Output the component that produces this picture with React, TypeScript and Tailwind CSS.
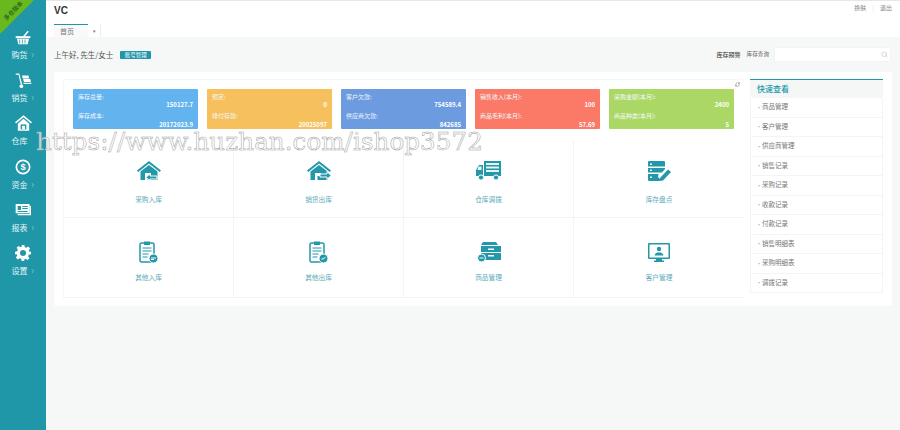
import React from "react";
import { ChevronRight, RefreshCw, Search } from "lucide-react";

const font = { fontFamily: '"Noto Sans CJK SC","Liberation Sans",sans-serif' };
const T = "#2298aa";

function Basket() {
  return (
    <svg width="16" height="15" viewBox="0 0 24 22" fill="#fff">
      <path d="M1 9h22v3H1z" />
      <path d="M3 13h18l-2 8H5z" />
      <path d="M12 9l7-8 1.600 1.200L15 9z" />
      <path d="M7 14v6M11 14v6M15 14v6" stroke={T} strokeWidth="1.200" />
    </svg>
  );
}
function Cart() {
  return (
    <svg width="17" height="17" viewBox="0 0 24 24" fill="#fff">
      <path d="M1 2h5l4 15h-2L5 4H1z" />
      <circle cx="9" cy="20" r="2.600" />
      <path d="M10 5h9l1 4h-9zM11.500 10h10l1 4h-10zM12 15h11v2H12z" />
    </svg>
  );
}
function Home() {
  return (
    <svg width="17" height="16" viewBox="0 0 24 22" fill="#fff">
      <path d="M12 0L0 10l1.500 1.800L12 3l10.500 8.800L24 10z" />
      <path d="M4 12l8-7 8 7v10H4z" />
      <path d="M8 13h8v7H8z" fill={T} />
      <path d="M10 15h4v5h-4z" />
    </svg>
  );
}
function Money() {
  return (
    <svg width="16" height="16" viewBox="0 0 24 24" fill="none">
      <circle cx="12" cy="12" r="10" stroke="#fff" strokeWidth="2.500" fill={T} />
      <text x="12" y="17" textAnchor="middle" fontSize="14" fontWeight="700" fill="#fff" fontFamily="Liberation Sans">$</text>
    </svg>
  );
}
function Report() {
  return (
    <svg width="16" height="14" viewBox="0 0 24 20" fill="#fff">
      <path d="M1 1h20a1 1 0 0 1 1 1v13H2a1 1 0 0 1-1-1z" />
      <path d="M22 4h2v14H4v-2h18z" />
      <path d="M4 4h5v6H4zM11 4h8v1.500h-8zM11 7h8v1.500h-8zM4 11.500h15V13H4z" fill={T} />
    </svg>
  );
}
function Gear() {
  return (
    <svg width="16" height="16" viewBox="0 0 24 24" fill="#fff" fillRule="evenodd">
      <path d="M10 0h4l.7 3.400 2.200.9 2.900-1.900 2.800 2.800-1.900 2.900.9 2.200L24 10v4l-3.400.7-.9 2.200 1.900 2.900-2.800 2.800-2.900-1.900-2.200.9L14 24h-4l-.7-3.400-2.200-.9-2.900 1.900-2.800-2.800 1.900-2.900-.9-2.200L0 14v-4l3.400-.7.9-2.200L2.400 4.200l2.800-2.800 2.900 1.900 2.200-.9zM12 7.500a4.500 4.500 0 1 0 0 9 4.500 4.500 0 0 0 0-9z" />
    </svg>
  );
}

function HouseIcon({ out }: { out?: boolean }) {
  return (
    <svg width="24" height="20" viewBox="0 0 24 20" fill={T}>
      <path d="M12 0L0 9.500l1.300 1.500L12 2.500 22.700 11 24 9.500z" />
      <path d="M3.500 10.500L12 4l8.500 6.500V19h-17z" />
      <path d="M8 19v-7h6v3H10.500v4z" fill="#fff" />
      {out ? <path d="M13 13h7v-2.500l4 4-4 4V16h-7z" fill={T} stroke="#fff" strokeWidth="1" /> : <path d="M20 15h-7v-2.500l-4 4 4 3V18h7z" fill={T} stroke="#fff" strokeWidth="1" />}
    </svg>
  );
}
function Truck() {
  return (
    <svg width="25" height="20" viewBox="0 0 25 20" fill={T}>
      <path d="M8 0h17v15H8z" />
      <path d="M10 2h13v2H10zM10 5.500h13v2H10zM10 9h13v2H10z" fill="#e6f4f6" />
      <path d="M7 4v11H0V9l3-5z" />
      <path d="M2.500 5.500h3v3.500H1.500z" fill="#fff" />
      <circle cx="5" cy="16.500" r="2.600" stroke="#fff" />
      <circle cx="20" cy="16.500" r="2.600" stroke="#fff" />
    </svg>
  );
}
function Stack() {
  return (
    <svg width="23" height="20" viewBox="0 0 23 20" fill={T}>
      <path d="M0 1a1 1 0 0 1 1-1h15a1 1 0 0 1 1 1v4.500H0zM0 7h17v1l-3 3.500H0zM0 13h10.500l-.5 3 2.500 2.500-1 1.500H1a1 1 0 0 1-1-1z" />
      <path d="M2 2.500h2v1.500H2zM2 8.500h2V10H2zM2 15.500h2V17H2z" fill="#fff" />
      <path d="M12 17l8-8.500 3 2.500-8 8.500-3.500.5z" />
    </svg>
  );
}
function Clip({ out }: { out?: boolean }) {
  return (
    <svg width="20" height="24" viewBox="0 0 20 24" fill="none">
      <rect x="1" y="3" width="14" height="19" rx="1.500" stroke={T} strokeWidth="1.500" />
      <path d="M5 1.500h6V5H5z" fill={T} />
      <path d="M3.500 8h9M3.500 11h9M3.500 14h6M3.500 17h5" stroke={T} strokeWidth="1.200" />
      <circle cx="14.500" cy="18.500" r="4.500" fill={T} stroke="#fff" />
      {out ? <path d="M12.500 19l2-.1 2-2" stroke="#fff" /> : <path d="M12 18h5M12 19.500h3" stroke="#fff" />}
    </svg>
  );
}
function Box() {
  return (
    <svg width="24" height="21" viewBox="0 0 24 21" fill={T}>
      <path d="M6 0h13l2 3H4z" />
      <path d="M4 4h20v14H4z" />
      <path d="M4 10.500h20" stroke="#fff" />
      <path d="M11 6.500h6v1.500h-6zM11 13h6v1.500h-6z" fill="#fff" />
      <circle cx="4.500" cy="16" r="4" stroke="#fff" />
      <path d="M2.500 15.500h4v1h-4z" fill="#fff" />
    </svg>
  );
}
function Monitor() {
  return (
    <svg width="22" height="19" viewBox="0 0 22 19" fill={T}>
      <path fillRule="evenodd" d="M0 1a1 1 0 0 1 1-1h20a1 1 0 0 1 1 1v14a1 1 0 0 1-1 1H1a1 1 0 0 1-1-1zM1.500 1.500v13h19v-13z" />
      <circle cx="11" cy="6" r="2.200" />
      <path d="M6.500 12.500c.5-2.500 2.500-3 4.500-3s4 .5 4.500 3z" />
      <path d="M8 16h6v1.500h2V19H6v-1.500h2z" />
    </svg>
  );
}

const nav = [
  { icon: <Basket />, label: "购货", arrow: true },
  { icon: <Cart />, label: "销货", arrow: true },
  { icon: <Home />, label: "仓库", arrow: false },
  { icon: <Money />, label: "资金", arrow: true },
  { icon: <Report />, label: "报表", arrow: true },
  { icon: <Gear />, label: "设置", arrow: true },
];

const cards = [
  { bg: "bg-[#63b3ee]", a: "库存总量:", av: "150127.7", b: "库存成本:", bv: "20172023.9" },
  { bg: "bg-[#f6c05c]", a: "预定:", av: "0", b: "排付存款:", bv: "20025097" },
  { bg: "bg-[#6c9be0]", a: "客户欠款:", av: "754589.4", b: "供应商欠款:", bv: "842685" },
  { bg: "bg-[#fa7967]", a: "销售收入(本月):", av: "100", b: "商品毛利(本月):", bv: "57.69" },
  { bg: "bg-[#abd865]", a: "采购金额(本月):", av: "2400", b: "商品种类(本月):", bv: "5" },
];

const tiles = [
  { icon: <HouseIcon />, label: "采购入库" },
  { icon: <HouseIcon out />, label: "销货出库" },
  { icon: <Truck />, label: "仓库调拨" },
  { icon: <Stack />, label: "库存盘点" },
  { icon: <Clip />, label: "其他入库" },
  { icon: <Clip out />, label: "其他出库" },
  { icon: <Box />, label: "商品管理" },
  { icon: <Monitor />, label: "客户管理" },
];

const quick = ["商品管理", "客户管理", "供应商管理", "销售记录", "采购记录", "收款记录", "付款记录", "销售明细表", "采购明细表", "调拨记录"];

export default function App() {
  return (
    <div className="relative flex h-[430px] w-[900px] overflow-hidden bg-[#f6f7f7]" style={font}>
      <aside className="relative flex w-[46px] shrink-0 flex-col bg-[#2097a9] pt-[28px] text-white">
        <div className="absolute left-0 top-0 h-0 w-0 border-b-[34px] border-l-[34px] border-t-0 border-r-0 border-b-transparent border-l-[#69b91e]" />
        <div className="absolute left-[-2px] top-[7px] w-[30px] -rotate-45 text-center text-[6px] font-bold leading-[7px] text-[#2f6d1a]">多仓版本</div>
        {nav.map((n) => (
          <div key={n.label} className="relative flex h-[43.200px] flex-col items-center">
            <div className="flex h-[18px] items-center justify-center">{n.icon}</div>
            <div className="relative mt-[3px] flex items-center pr-[7px] text-[8px] leading-[12px] text-[#e6f5f7]">
              {n.label}
              {n.arrow && <ChevronRight className="absolute -right-[1px] top-[3px] text-[#cfeaef]" size={6} strokeWidth={2} />}
            </div>
          </div>
        ))}
      </aside>

      <main className="flex min-w-0 flex-1 flex-col">
        <header className="h-[37px] border-t border-[#e8e8e8] bg-white">
          <div className="flex items-start justify-between pl-[8px] pr-[8px]">
            <div className="mt-[3px] text-[10px] font-bold leading-[14px] text-[#333]" style={{ fontFamily: '"Liberation Sans",sans-serif' }}>VC</div>
            <div className="mt-[2px] flex items-center text-[6px] leading-[9px] text-[#888]">
              <span>换肤</span>
              <span className="mx-[6px] text-[#ddd]">|</span>
              <span>退出</span>
            </div>
          </div>
          <div className="mt-[6px] flex pl-[8px]">
            <div className="flex h-[13px] w-[34px] items-center border-t border-[#2097a9] bg-[#f9f9f9] pl-[6px] text-[7px] leading-[10px] text-[#777]">首页</div>
            <div className="flex h-[13px] w-[13px] items-center justify-center border-r border-[#eee] text-[5px] leading-[10px] text-[#777]">▾</div>
          </div>
        </header>

        <div className="flex h-[35px] items-center justify-between pl-[8px] pr-[10px]">
          <div className="flex items-center text-[7.500px] text-[#555]">
            <span>上午好, 先生/女士</span>
            <span className="ml-[7px] flex h-[8px] w-[31px] items-center justify-center rounded-[1px] bg-[#2097a9] text-[5.500px] leading-[8px] text-white">账号管理</span>
          </div>
          <div className="flex items-center text-[#666]">
            <span className="text-[6px] font-bold">库存预警</span>
            <span className="ml-[6px] text-[5.600px]">库存查询</span>
            <div className="ml-[6px] flex h-[13px] w-[115px] items-center justify-end bg-white pr-[2px] shadow-[0_0_1px_#e2e2e2]">
              <Search size={7} className="text-[#bbb]" />
            </div>
          </div>
        </div>

        <section className="ml-[8px] mr-[8px] h-[234px] rounded-[3px] bg-white px-[9px] pt-[7px]">
          <div className="flex gap-[6px]">
            <div className="relative w-[681px] rounded-t-[3px] border-l border-t border-[#f5f6f6] pl-[9px] pt-[9px]">
              <RefreshCw size={5} className="absolute right-[4px] top-[2px] text-[#666]" />
              <div className="flex gap-[9px]">
                {cards.map((c) => (
                  <div key={c.a} className={`h-[40px] w-[125px] rounded-[1px] px-[5px] pt-[4px] text-[6px] leading-[7px] text-white ${c.bg}`}>
                    <div className="text-[#f2f9fe]">{c.a}</div>
                    <div className="mt-[1px] text-right font-bold">{c.av}</div>
                    <div className="mt-[3.500px] text-[#f2f9fe]">{c.b}</div>
                    <div className="mt-[2px] text-right font-bold">{c.bv}</div>
                  </div>
                ))}
              </div>
              <div className="-ml-[9px] mt-[11px] grid w-[681px] grid-cols-[170px_170px_170px_170px] grid-rows-[78px_80px]">
                {tiles.map((t, i) => (
                  <div key={t.label} className={`flex flex-col items-center border-b border-[#f3f4f4] ${i % 4 === 3 ? "" : "border-r"} ${i < 4 ? "pt-[19px]" : "pt-[22px]"}`}>
                    <div className="flex h-[24px] items-center justify-center">{t.icon}</div>
                    <div className={`${i < 4 ? "mt-[10px]" : "mt-[7px]"} text-[6.700px] leading-[12px] text-[#5aaaba]`}>{t.label}</div>
                  </div>
                ))}
              </div>
            </div>
            <div className="w-[133px] shrink-0 border-t border-[#2097a9]">
              <div className="flex h-[18px] items-center rounded-b-[2px] bg-[#f5f7f7] pl-[7px] text-[8px] font-medium text-[#2097a9]">快速查看</div>
              {quick.map((q) => (
                <div key={q} className="flex h-[19.500px] items-center border-x border-b border-[#f3f4f4] pl-[5px] text-[6.500px] text-[#777]">
                  <span className="mr-[3px] w-[3px] text-[6px] text-[#aaa]">·</span>
                  {q}
                </div>
              ))}
            </div>
          </div>
        </section>
      </main>

      <div
        className="pointer-events-none absolute left-[36px] top-[131px] whitespace-nowrap text-[24.500px] leading-[21px] tracking-[0.1px] text-white/70 [-webkit-text-stroke:0.5px_#a0a0a0]"
        style={{ fontFamily: '"DejaVu Serif",serif' }}
      >
        https://www.huzhan.com/ishop3572
      </div>
    </div>
  );
}
